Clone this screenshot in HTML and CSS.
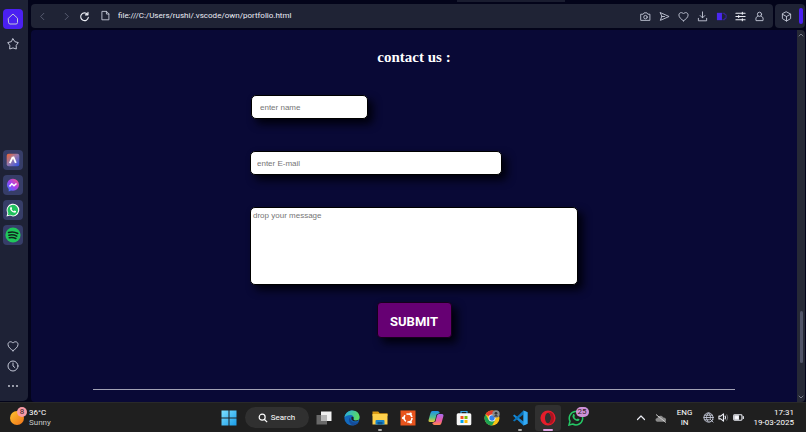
FILE: index.html
```html
<!DOCTYPE html>
<html lang="en">
<head>
<meta charset="utf-8">
<title>Portfolio</title>
<link rel="stylesheet" href="styles.css">
</head>
<body>
<div class="window">
  <nav class="sidebar" aria-label="Sidebar">
    <button class="side-btn home" aria-label="Home"><svg class="line" viewBox="0 0 12 12"><path d="M1.500 5.200 6 1l4.500 4.200V9.500a1.500 1.500 0 0 1-1.500 1.500H3a1.500 1.500 0 0 1-1.500-1.500z"/></svg></button>
    <button class="side-btn" aria-label="Bookmarks"><svg class="line" viewBox="0 0 12 12"><path d="M6 .8 7.900 3.700 11.300 4.600 9.200 7.400 9.300 11 6 9.900 2.700 11 2.800 7.400.7 4.600 4.100 3.700z"/></svg></button>
    <div class="apps">
      <button class="side-btn app" aria-label="Aria"><svg viewBox="0 0 14 14"><defs><linearGradient id="ga" x1="0" y1="0" x2="1" y2="1"><stop offset="0" stop-color="#f0632f"/><stop offset=".45" stop-color="#9a79a8"/><stop offset="1" stop-color="#2b4ee8"/></linearGradient></defs><rect x=".7" y=".7" width="12.600" height="12.600" rx="2" fill="url(#ga)"/><path d="M3.800 10.200 6.800 4M7.200 3.700 9.800 9.800" fill="none" stroke="#fff" stroke-width="1.800"/></svg></button>
      <button class="side-btn app" aria-label="Messenger"><svg viewBox="0 0 14 14"><defs><linearGradient id="gm" x1="0" y1="1" x2="1" y2="0"><stop offset="0" stop-color="#2f7bff"/><stop offset=".5" stop-color="#a53df0"/><stop offset="1" stop-color="#ff5a78"/></linearGradient></defs><path d="M7 .8a6 6 0 0 1 0 12l-2-.3-2.300.9V11A6 6 0 0 1 7 .8z" fill="url(#gm)"/><path d="M3.500 8.500 5.800 5.800 8 7.800 10.500 5.500" fill="none" stroke="#fff" stroke-width="1.500"/></svg></button>
      <button class="side-btn app" aria-label="WhatsApp"><svg viewBox="0 0 14 14"><path d="M.5 13.500 1.400 10A6.300 6.300 0 1 1 4 12.600z" fill="#fff"/><path d="M1.700 12.300 2.400 10A5.300 5.300 0 1 1 4.200 11.700z" fill="#20c15e"/><path d="M4.500 4.200c.6-.6 1-.4 1.200.2l.4 1-.5.800c.5 1 1.200 1.600 2.200 2l.8-.7 1.500.7c0 1.300-1.200 1.700-2.200 1.400C5.900 8.900 4.400 7.500 4 5.800z" fill="#fff"/></svg></button>
      <button class="side-btn app" aria-label="Spotify"><svg class="big" viewBox="0 0 16 16"><circle cx="8" cy="8" r="7.600" fill="#20c65b"/><path d="M3.500 5.500c3-.9 6.500-.6 9.300 1M3.900 8.200c2.700-.8 5.500-.4 7.900.9M4.300 10.700c2.300-.6 4.500-.3 6.600.8" fill="none" stroke="#10251d" stroke-width="1.500" stroke-linecap="round"/></svg></button>
    </div>
    <div class="tools">
      <button class="side-btn" aria-label="Favourites"><svg class="line" viewBox="0 0 12 12"><path d="M6 10.700C3.500 9 1 7 1 4.400 1 1.500 4.500.9 6 3.100 7.500.9 11 1.500 11 4.400 11 7 8.500 9 6 10.700z"/></svg></button>
      <button class="side-btn" aria-label="History"><svg class="line" viewBox="0 0 12 12"><circle cx="6" cy="6" r="5"/><path d="M6 3v3l1.800 1.500"/></svg></button>
      <button class="side-btn" aria-label="More"><svg viewBox="0 0 12 12" fill="#d4d7e2"><circle cx="2" cy="6" r=".9"/><circle cx="6" cy="6" r=".9"/><circle cx="10" cy="6" r=".9"/></svg></button>
    </div>
  </nav>

  <div class="browser">
    <div class="tabstrip"><div class="tab"></div></div>
    <div class="toolbar">
      <div class="address">
        <button class="nav-btn dim" aria-label="Back"><svg class="line" viewBox="0 0 12 12"><path d="M7.500 2.500 4 6l3.500 3.500"/></svg></button>
        <button class="nav-btn dim" aria-label="Forward"><svg class="line" viewBox="0 0 12 12"><path d="M4.500 2.500 8 6 4.500 9.500"/></svg></button>
        <button class="nav-btn" aria-label="Reload"><svg class="line strong" viewBox="0 0 12 12"><path d="M9.300 3.600A4.200 4.200 0 1 0 10.200 7M9.800 1.500v2.700H7"/></svg></button>
        <span class="nav-btn"><svg class="line" viewBox="0 0 12 12"><path d="M2.500 1.500h4.700l2.500 2.700v6.500H2.500zM7 1.500v2.900h2.700"/></svg></span>
        <input class="url" type="text" aria-label="Address" value="file:///C:/Users/rushi/.vscode/own/portfolio.html">
        <button class="act" aria-label="Snapshot"><svg class="line" viewBox="0 0 12 12"><path d="M1.200 3.500h2.300l1-1.500h3l1 1.500h2.300v6.700H1.200z"/><circle cx="6" cy="6.700" r="1.900"/></svg></button>
        <button class="act" aria-label="Send"><svg class="line" viewBox="0 0 12 12"><path d="M1.500 1.800 11 6 1.500 10.200 3 6zM3 6h3"/></svg></button>
        <button class="act" aria-label="Add to favourites"><svg class="line" viewBox="0 0 12 12"><path d="M6 10.700C3.500 9 1 7 1 4.400 1 1.500 4.500.9 6 3.100 7.500.9 11 1.500 11 4.400 11 7 8.500 9 6 10.700z"/></svg></button>
        <button class="act" aria-label="Downloads"><svg class="line" viewBox="0 0 12 12"><path d="M6 1v6.300M3.500 5 6 7.500 8.500 5M1.500 8v2.700h9V8"/></svg></button>
        <button class="act" aria-label="Battery saver"><svg viewBox="0 0 12 12"><path d="M1 2h5.500v8H1z" fill="#4a28f0"/><path d="M7 2.500h2.500v1.500H11v4H9.500v1.500H7" fill="none" stroke="#3a25a8"/></svg></button>
        <button class="act" aria-label="Easy setup"><svg class="line strong" viewBox="0 0 12 12"><path d="M1 2.500h10M1 6h10M1 9.500h10M8 1.500v2M4 5v2M8 8.500v2"/></svg></button>
        <button class="act" aria-label="Profile"><svg class="line" viewBox="0 0 12 12"><circle cx="6" cy="3.600" r="2.300"/><path d="M4.200 5.500C2 6.500 1.800 8 2.200 10.500h7.600C10.200 8 10 6.500 7.800 5.500"/></svg></button>
      </div>
      <div class="extras">
        <button class="nav-btn" aria-label="Extensions"><svg class="line" viewBox="0 0 12 12"><path d="M6 1l4.500 2.300v5L6 11 1.500 8.300v-5zM1.500 3.500 6 6l4.500-2.500M6 6v5"/></svg></button>
        <span class="accent"></span>
      </div>
    </div>
    <div class="viewport">
      <main class="page">
        <h1>contact us :</h1>
        <form class="contact">
          <input class="field name" type="text" placeholder="enter name" aria-label="Name">
          <input class="field email" type="email" placeholder="enter E-mail" aria-label="E-mail">
          <textarea class="field message" placeholder="drop your message" aria-label="Message"></textarea>
          <button class="submit" type="button">SUBMIT</button>
        </form>
        <hr>
      </main>
      <div class="scrollbar">
        <svg class="line" viewBox="0 0 8 8"><path d="M2 5l2-2 2 2"/></svg>
        <div class="track"><div class="thumb"></div></div>
        <svg class="line" viewBox="0 0 8 8"><path d="M2 3l2 2 2-2"/></svg>
      </div>
    </div>
  </div>
</div>

<footer class="taskbar">
  <button class="weather">
    <span class="sun"><span class="badge alert">8</span></span>
    <span class="stack"><span class="bright">36°C</span><span>Sunny</span></span>
  </button>
  <div class="launch">
    <button class="task" aria-label="Start"><svg viewBox="0 0 16 16"><defs><linearGradient id="gw" x1="0" y1="0" x2="1" y2="1"><stop offset="0" stop-color="#7de0ff"/><stop offset="1" stop-color="#189be8"/></linearGradient></defs><path d="M.5.5h7v7h-7zM8.500.5h7v7h-7zM.5 8.500h7v7h-7zM8.500 8.500h7v7h-7z" fill="url(#gw)"/></svg></button>
    <button class="search"><svg viewBox="0 0 12 12" fill="none" stroke="#fff" stroke-width="1.400"><circle cx="5" cy="5" r="3.600"/><path d="M7.800 7.800 11 11"/></svg>Search</button>
    <button class="task" aria-label="Task view"><svg viewBox="0 0 16 16"><rect x="5" y="1.500" width="10.500" height="9.500" fill="#f2f2f2"/><rect x=".5" y="5" width="10.500" height="9.500" fill="#777" opacity=".85"/><path d="M5 5h6v6H5z" fill="#b8b8b8"/></svg></button>
    <button class="task" aria-label="Edge"><svg viewBox="0 0 16 16"><defs><linearGradient id="ge" x1="0" y1="0" x2="1" y2=".3"><stop offset="0" stop-color="#24a8e8"/><stop offset="1" stop-color="#5bdc63"/></linearGradient></defs><circle cx="8" cy="8" r="7.600" fill="#1269bd"/><path d="M.4 7.500C1 2.500 5 .4 8.300.4c4 0 7.300 2.800 7.300 6.500 0 2.600-2 3.800-4 3.800-1.500 0-2.700-.6-2-1.700C10.400 7.500 9 5 6.500 5 3.500 5 1.300 6 .4 7.500z" fill="url(#ge)"/><path d="M5.800 7.500C4 9.500 5 14 9 15.400 12 15.500 14 13.500 14.800 12 10 13.800 6.300 11.500 5.800 7.500z" fill="#164b99"/><path d="M7.400 7.300c.5-.6 1.800-.6 2.200.2l-.2 1.700c.5 1.500 3.300 1.700 5.300.6-1 2-5.500 2.200-7.200-.4z" fill="#1f1f1f"/></svg></button>
    <button class="task open" aria-label="File Explorer"><svg viewBox="0 0 16 16"><path d="M.5 1.500h5.700l1.500 1.700h7.800V6H.5z" fill="#dd9c14"/><path d="M.5 4h15v10.500H.5z" fill="#ffd14c"/><path d="M3.500 14.500V11q0-1 1-1h7q1 0 1 1v3.500z" fill="#1683cc"/><path d="M5.500 12h5v2.500h-5z" fill="#0b5794"/></svg></button>
    <button class="task" aria-label="Ubuntu"><svg viewBox="0 0 16 16"><path d="M.5.5h15v15H.5z" fill="#e8541d"/><circle cx="8" cy="8" r="4" fill="none" stroke="#fff" stroke-width="1.600" stroke-dasharray="6.800 1.580"/><g fill="#fff"><circle cx="3.200" cy="8" r="1.300"/><circle cx="10.600" cy="3.700" r="1.300"/><circle cx="10.600" cy="12.300" r="1.300"/></g></svg></button>
    <button class="task" aria-label="Copilot"><svg viewBox="0 0 16 16"><defs><linearGradient id="gc" x1="0" y1="0" x2="0" y2="1"><stop offset="0" stop-color="#1b8eea"/><stop offset=".6" stop-color="#55c48b"/><stop offset="1" stop-color="#f2cb31"/></linearGradient><linearGradient id="gd" x1="0" y1="0" x2="0" y2="1"><stop offset="0" stop-color="#a86cf1"/><stop offset=".6" stop-color="#ec5aa0"/><stop offset="1" stop-color="#ff8a4c"/></linearGradient></defs><path d="M4.500 1h5q1.800 0 2.300 2L8.500 4.500 7 10.500Q6.500 12 5 12H2Q0 12 .7 9.500L2.500 3Q3 1 4.500 1z" fill="url(#gc)"/><path d="M11 4h3q2 0 1.300 2.500L13.500 13q-.5 2-2 2h-5Q4.800 15 4.200 13L7.500 11.500 9 5.500Q9.500 4 11 4z" fill="url(#gd)"/></svg></button>
    <button class="task" aria-label="Store"><svg viewBox="0 0 16 16"><path d="M5 4V1.500h6V4" fill="none" stroke="#38a5e8" stroke-width="1.200"/><rect x=".7" y="3.300" width="14.600" height="12" rx="1.500" fill="#f7f7f7"/><path d="M4.500 6h3v3h-3z" fill="#f25022"/><path d="M8.500 6h3v3h-3z" fill="#7fba00"/><path d="M4.500 10h3v3h-3z" fill="#00a4ef"/><path d="M8.500 10h3v3h-3z" fill="#ffb900"/></svg></button>
    <button class="task" aria-label="Chrome"><svg viewBox="0 0 16 16"><circle cx="8" cy="8" r="7.500" fill="#fbc116"/><path d="M8 8 1.500 4.200A7.500 7.500 0 0 1 14.500 4.300H8z" fill="#e33b2e"/><path d="M1.500 4.200A7.500 7.500 0 0 0 8 15.500L11.300 9.800 4.700 9.900z" fill="#1da353"/><circle cx="8" cy="8" r="3.500" fill="#fff"/><circle cx="8" cy="8" r="2.700" fill="#3580ec"/><circle cx="12" cy="4" r="3.700" fill="#888c90"/><circle cx="12" cy="3.300" r="1.400" fill="#333"/><path d="M9.600 6.500q2.400-3 4.800 0" fill="#333"/></svg></button>
    <button class="task open" aria-label="Visual Studio Code"><svg viewBox="0 0 16 16"><path d="M11.500.5 15.500 2.300v11.400l-4 1.800L1 5.700 2.300 4.500l9.200 7z" fill="#1689d8"/><path d="M11.500.5v4L2.300 11.600 1 10.400z" fill="#0874bd"/><path d="m11.500.5 4 1.800v11.400l-4 1.800z" fill="#35aaf3"/></svg></button>
    <button class="task active" aria-label="Opera"><svg viewBox="0 0 16 16"><path fill-rule="evenodd" d="M8 .4a7.600 7.600 0 1 1 0 15.200A7.600 7.600 0 0 1 8 .4zM8 2.700C6.300 2.700 5 5 5 8s1.300 5.300 3 5.300S11 11 11 8 9.700 2.700 8 2.700z" fill="#e51d2b"/><path d="M8 2.700C11.500.8 14 4 14 8s-2.500 7.200-6 5.300c1.700 0 3-2.300 3-5.300S9.700 2.700 8 2.700z" fill="#ad1220"/></svg></button>
    <button class="task" aria-label="WhatsApp, 25 unread"><svg viewBox="0 0 16 16"><path d="M1 15l1-3.800A6.700 6.700 0 1 1 4.700 14z" fill="none" stroke="#25c765" stroke-width="1.500"/><path d="M5 4.500c.8-.7 1.300-.4 1.500.3l.4 1.200-.6.900c.6 1.200 1.400 1.900 2.600 2.400l.9-.8 1.700.8c0 1.500-1.400 2-2.600 1.700C6.600 10.300 4.900 8.600 4.400 6.600z" fill="#25c765"/></svg><span class="badge count">25</span></button>
  </div>
  <div class="tray">
    <button class="tray-btn" aria-label="Show hidden icons"><svg class="line strong" viewBox="0 0 12 12"><path d="M2.500 7.500 6 4l3.500 3.500"/></svg></button>
    <button class="tray-btn" aria-label="OneDrive"><svg viewBox="0 0 12 12"><path d="M2 9.700C-.5 8.500.5 6 2.500 6 3 3.300 7 2.800 8.300 5.400c3-.2 3.700 3.300 1.500 4.300z" fill="#8b8b8b"/><path d="M1 2.500 11 10.500" stroke="#ccc"/></svg></button>
    <button class="stack lang"><span>ENG</span><span>IN</span></button>
    <button class="status" aria-label="Network, volume and battery">
      <svg class="line" viewBox="0 0 12 12"><circle cx="6" cy="6" r="5"/><path d="M1 6h10M1.800 3.500h8.400M1.800 8.500H7M6 1C3 4 3 8 6 11M6 1c2 2 2.500 4 2 6M8 8l3 3M11 8l-3 3"/></svg>
      <svg class="line strong" viewBox="0 0 12 12"><path d="M1 4.500h2L6 2v8L3 7.500H1zM7.800 4.500q1 1.500 0 3"/><path d="M9.500 3q2 3 0 6" opacity=".35"/></svg>
      <svg class="line strong" viewBox="0 0 12 12"><rect x=".8" y="3" width="9" height="6" rx="1"/><path d="M2 4.200h4v3.600H2z" fill="#fff"/><path d="M11.300 5v2"/></svg>
    </button>
    <button class="stack clock"><span>17:31</span><span>19-03-2025</span></button>
  </div>
</footer>
</body>
</html>
```
FILE: styles.css
```css
* { box-sizing: border-box; }

body {
  margin: 0;
  min-height: 100vh;
  display: flex;
  flex-direction: column;
  background: #03041a;
  color: #eceef5;
  font: 8px/10px Roboto, "Noto Sans", sans-serif;
}

button {
  display: flex;
  align-items: center;
  justify-content: center;
  margin: 0;
  padding: 0;
  border: 0;
  background: none;
  color: inherit;
  font: inherit;
}

svg { display: block; flex: none; width: 12px; height: 12px; }
.line { fill: none; stroke: #c3c7d6; stroke-width: 1; stroke-linejoin: round; stroke-linecap: round; }
.strong { stroke: #eceef5; stroke-width: 1.2; }

.window { flex: 1; display: flex; gap: 3px; }

/* Sidebar */
.sidebar {
  width: 28px;
  margin-bottom: 1px;
  padding: 9px 2px 5px 0;
  display: flex;
  flex-direction: column;
  align-items: center;
  gap: 5px;
  background: #1e2236;
  border-radius: 0 0 5px 0;
}
.side-btn { width: 20px; height: 20px; border-radius: 4px; }
.home { background: #4b20f2; }
.apps { display: flex; flex-direction: column; gap: 5px; margin-top: 91px; }
.app { background: #363d68; }
.app svg { width: 14px; height: 14px; }
.app .big { width: 16px; height: 16px; }
.tools { margin-top: auto; }

/* Browser chrome */
.browser { flex: 1; min-width: 0; display: flex; flex-direction: column; padding-right: 1px; }
.tabstrip { height: 4px; }
.tab { width: 14%; height: 2px; margin-left: 55%; background: #1a1d30; }
.toolbar { display: flex; gap: 2px; height: 24px; margin-bottom: 2px; }
.address, .extras { display: flex; align-items: center; background: #1f2335; border-radius: 4px; }
.address { flex: 1; padding: 0 4px 0 5px; }
.nav-btn { display: flex; width: 12px; height: 12px; margin-right: 12px; }
.nav-btn svg { width: 11px; height: 11px; }
.nav-btn + .nav-btn { margin-right: 10px; }
.dim .line { stroke: #5c6075; }
.dim + .dim { margin-right: 6px; }
.url {
  flex: 1;
  min-width: 0;
  margin-left: -4px;
  padding: 0;
  border: 0;
  background: none;
  color: #eceef5;
  font: inherit;
}
.act { width: 19px; height: 19px; }
.act svg { width: 11px; height: 11px; }
.extras { width: 30px; padding: 0 2px 0 5px; justify-content: space-between; }
.extras .nav-btn { margin: 0; }
.accent { width: 4px; height: 16px; border-radius: 2px; background: #4b20f2; }

/* Web page */
.viewport { flex: 1; display: flex; }
.page {
  flex: 1;
  padding: 19px 8% 12px;
  display: flex;
  flex-direction: column;
  align-items: center;
  background: #090936;
  border-radius: 4px 0 0 4px;
  font-family: "Liberation Sans", Arial, sans-serif;
}
h1 {
  margin: 0 0 29px;
  font: bold 15px/17px "Liberation Serif", "Times New Roman", serif;
  color: #fff;
}
.contact { width: 328px; display: flex; flex-direction: column; align-items: flex-start; }
.field {
  display: block;
  height: 24px;
  margin: 0 0 32px;
  padding: 0 6px;
  border: 1px solid #000;
  border-radius: 5px;
  background: #fff;
  box-shadow: 5px 5px 8px #00000c;
  color: #222;
  font: 8px/10px "Liberation Sans", Arial, sans-serif;
  resize: none;
}
.field::placeholder { color: #757575; opacity: 1; }
.name { width: 117px; margin-left: 1px; padding: 0 8px; }
.email { width: 252px; }
.message { width: 100%; height: 78px; margin-bottom: 17px; padding: 3px 2px; }
.submit {
  align-self: center;
  width: 75px;
  height: 36px;
  padding-top: 3px;
  border: 1px solid #16001c;
  border-radius: 4px;
  background: #660073;
  box-shadow: 5px 5px 8px #00000c;
  color: #fff;
  font: bold 13px/16px Roboto, Arial, sans-serif;
}
hr { width: 100%; margin: auto 0 0; border: 0; border-top: 1px solid #a2a2b5; }

.scrollbar {
  width: 8px;
  padding: 1px 0;
  display: flex;
  flex-direction: column;
  align-items: center;
  background: #262936;
  border-radius: 0 4px 4px 0;
}
.scrollbar svg { width: 8px; height: 8px; }
.scrollbar .line { stroke: #777b89; }
.track { flex: 1; display: flex; flex-direction: column; justify-content: flex-end; padding-bottom: 30px; }
.thumb { width: 3px; height: 52px; border-radius: 2px; background: #505468; }

/* Taskbar */
.taskbar {
  height: 30px;
  display: grid;
  grid-template-columns: 1fr auto 1fr;
  align-items: center;
  background: #1f1f1f;
  border-top: 1px solid #292929;
}
.weather { justify-self: start; gap: 5px; padding-left: 10px; color: #c8c8c8; }
.stack { display: flex; flex-direction: column; align-items: flex-start; }
.bright { color: #fff; }
.sun { position: relative; width: 14px; height: 14px; border-radius: 50%; background: linear-gradient(135deg, #ffc42e, #f0711a); }
.badge { position: absolute; display: block; border-radius: 6px; text-align: center; color: #351c24; }
.alert { top: -4px; right: -3px; width: 10px; height: 10px; background: #f89aa5; }
.launch { display: flex; align-items: center; padding-right: 2px; }
.task { position: relative; width: 28px; height: 28px; }
.task svg { width: 16px; height: 16px; }
.search { width: 64px; height: 21px; margin: 0 1px 0 2px; gap: 3px; border-radius: 11px; background: #303030; color: #fff; }
.search svg { width: 10px; height: 10px; }
.active { width: 26px; height: 26px; margin: 0 1px; border-radius: 3px; background: #303030; }
.open::after, .active::after {
  content: "";
  position: absolute;
  bottom: 1px;
  width: 4px;
  height: 2px;
  border-radius: 1px;
  background: #aaa;
}
.active::after { bottom: 0; width: 10px; background: #dda4e2; }
.count { top: 3px; right: 1px; width: 13px; height: 10px; background: #cf91d8; }
.tray { justify-self: end; display: flex; align-items: center; padding-right: 12px; color: #fff; }
.tray-btn { width: 20px; height: 20px; }
.lang { width: 28px; align-items: center; }
.status { gap: 4px; padding: 0 10px 0 4px; }
.status svg { width: 11px; height: 11px; }
.clock { align-items: flex-end; }
```
